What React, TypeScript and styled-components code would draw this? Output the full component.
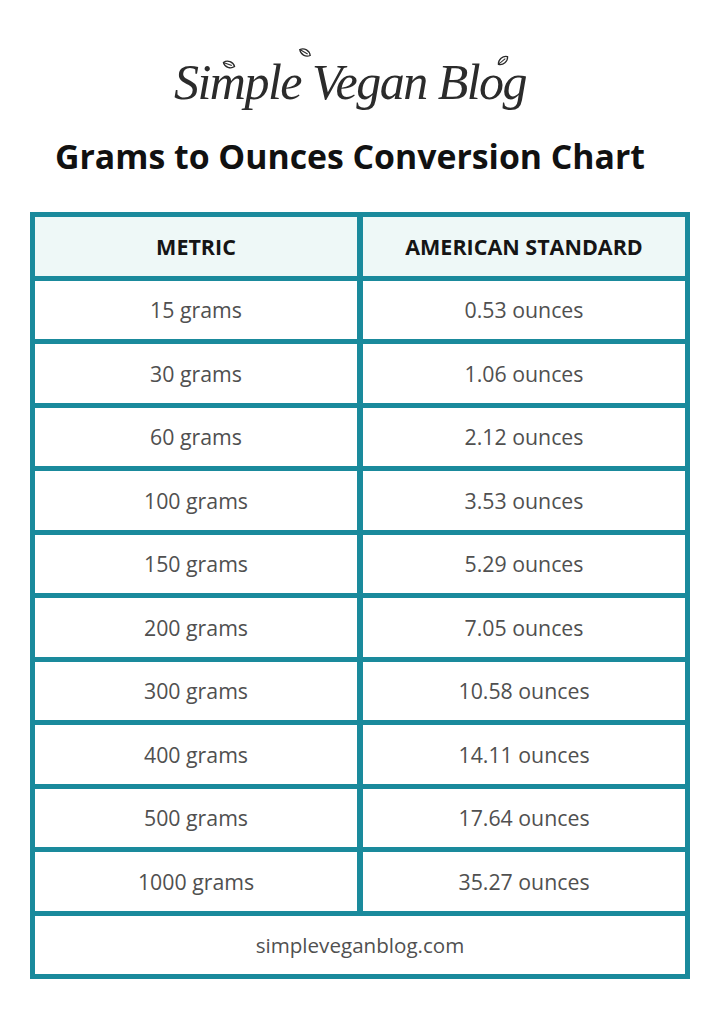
import React, { FC } from 'react';
import styled, { createGlobalStyle } from 'styled-components';

const rows: [string, string][] = [
  ['15 grams', '0.53 ounces'],
  ['30 grams', '1.06 ounces'],
  ['60 grams', '2.12 ounces'],
  ['100 grams', '3.53 ounces'],
  ['150 grams', '5.29 ounces'],
  ['200 grams', '7.05 ounces'],
  ['300 grams', '10.58 ounces'],
  ['400 grams', '14.11 ounces'],
  ['500 grams', '17.64 ounces'],
  ['1000 grams', '35.27 ounces'],
];

const Leaf: FC<{ rotate: number }> = ({ rotate }) => (
  <svg width="14" height="9" viewBox="0 0 14 9" style={{ transform: `rotate(${rotate}deg)` }}>
    <path d="M1 4.5 C4 0.5 10 0.5 13 4.5 C10 8.5 4 8.5 1 4.5 Z" fill="none" stroke="#2a2a2a" strokeWidth="1.3" />
    <path d="M1 4.5 L10 4.5" stroke="#2a2a2a" strokeWidth="1" />
  </svg>
);

const App: FC = () => (
  <>
    <GlobalStyle />
    <Page>
      <LogoWrap>
        <Logo>Simple Vegan Blog</Logo>
        <LeafSpot $left={48} $top={20}>
          <Leaf rotate={20} />
        </LeafSpot>
        <LeafSpot $left={124} $top={8}>
          <Leaf rotate={30} />
        </LeafSpot>
        <LeafSpot $left={322} $top={16}>
          <Leaf rotate={-40} />
        </LeafSpot>
      </LogoWrap>
      <Title>Grams to Ounces Conversion Chart</Title>
      <Table>
        <HeadCell>METRIC</HeadCell>
        <HeadCell>AMERICAN STANDARD</HeadCell>
        {rows.map(([metric, us]) => (
          <React.Fragment key={metric}>
            <Cell>{metric}</Cell>
            <Cell>{us}</Cell>
          </React.Fragment>
        ))}
        <FooterCell>simpleveganblog.com</FooterCell>
      </Table>
    </Page>
  </>
);

export default App;

const GlobalStyle = createGlobalStyle`
  html, body {
    margin: 0;
    padding: 0;
    background: #ffffff;
  }
  body {
    font-family: "Open Sans", "Liberation Sans", sans-serif;
  }
`;

const Page = styled.div`
  width: 720px;
  height: 1018px;
  display: flex;
  flex-direction: column;
  align-items: center;
  padding-top: 40px;
  box-sizing: border-box;
`;

const LogoWrap = styled.div`
  position: relative;
  height: 84px;
  margin-right: 20px;
  display: flex;
  align-items: center;
`;

const Logo = styled.div`
  font-family: "Liberation Serif", "DejaVu Serif", serif;
  font-style: italic;
  font-size: 50px;
  letter-spacing: -1.5px;
  color: #2b2b2b;
  line-height: 1;
  white-space: nowrap;
`;

const LeafSpot = styled.span<{ $left: number; $top: number }>`
  position: absolute;
  left: ${({ $left }) => $left}px;
  top: ${({ $top }) => $top}px;
  display: flex;
`;

const Title = styled.h1`
  margin: 12px 20px 0 0;
  font-size: 33.8px;
  font-weight: 700;
  color: #111111;
  line-height: 40px;
  white-space: nowrap;
`;

const Table = styled.div`
  margin-top: 36px;
  width: 660px;
  box-sizing: border-box;
  display: grid;
  grid-template-columns: 1fr 1fr;
  grid-auto-rows: 58.5px;
  gap: 5px 6px;
  padding: 5px;
  background: #1a8a9c;
`;

const Cell = styled.div`
  background: #ffffff;
  display: flex;
  align-items: center;
  justify-content: center;
  font-size: 21.3px;
  color: #505050;
`;

const HeadCell = styled(Cell)`
  background: #eef8f7;
  font-size: 21.5px;
  font-weight: 700;
  color: #151515;
`;

const FooterCell = styled(Cell)`
  grid-column: 1 / span 2;
  font-size: 20.6px;
`;
